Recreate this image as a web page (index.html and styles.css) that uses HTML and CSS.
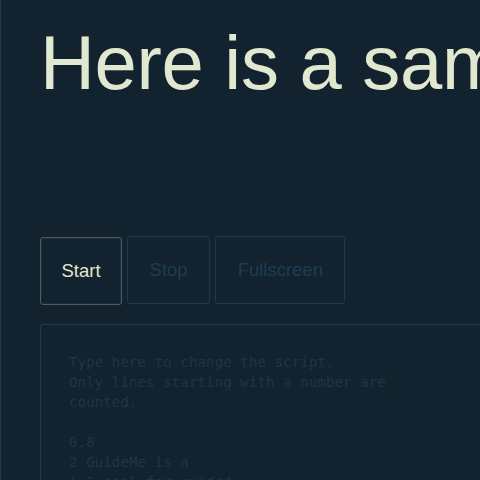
FILE: index.html
```html
<!DOCTYPE html>
<html>
<head>
<meta charset="utf-8">
<link rel="stylesheet" href="styles.css">
</head>
<body>
<div class="page">
  <h1 class="title">Here is a sample</h1>
  <div class="controls">
    <button class="btn btn-active">Start</button>
    <button class="btn">Stop</button>
    <button class="btn">Fullscreen</button>
  </div>
  <div class="script">Type here to change the script.
Only lines starting with a number are
counted.

0.8
2 GuideMe is a
1.5 cool for guided</div>
</div>
</body>
</html>
```
FILE: styles.css
```css
html, body {
  margin: 0;
  padding: 0;
  background: #12222e;
  height: 100%;
  overflow: hidden;
}
.page {
  border-left: 1px solid #1f3b4e;
  height: 100%;
  padding: 24px 0 0 39px;
  box-sizing: border-box;
  font-family: "Liberation Sans", Arial, sans-serif;
}
.title {
  margin: 0;
  font-size: 76px;
  line-height: 77px;
  font-weight: normal;
  color: #e1e8d0;
  white-space: nowrap;
  letter-spacing: -0.3px;
}
.controls {
  display: flex;
  gap: 5px;
  margin-top: 135px;
  height: 68px;
}
.btn {
  font-family: "Liberation Sans", Arial, sans-serif;
  font-size: 18.5px;
  background: transparent;
  color: #1f3d51;
  border: 1px solid #1d3a4e;
  border-radius: 3px;
  padding: 0 21.5px 0 21.5px;
  height: 68px;
}
.btn-active {
  color: #e1e8d0;
  border: 1px solid #4d5a62;
  box-shadow: inset 0 0 0 1px #1a2d39;
  margin-top: 1px;
  padding: 0 20.5px;
}
.script {
  margin-top: 20px;
  border: 1px solid #1d3a4e;
  border-right: none;
  border-radius: 3px 0 0 0;
  padding: 27px 28px;
  font-family: "DejaVu Sans Mono", monospace;
  font-size: 14px;
  line-height: 20px;
  letter-spacing: 0.14px;
  color: #1e3647;
  white-space: pre;
  height: 300px;
}
```
